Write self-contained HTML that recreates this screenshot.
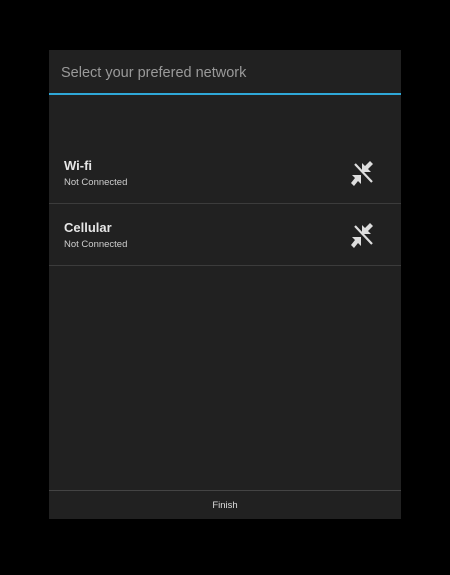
<!DOCTYPE html>
<html><head><style>
body{margin:0;background:#000;width:450px;height:575px;position:relative;font-family:"Liberation Sans",sans-serif;overflow:hidden}
.p{position:absolute;left:49px;top:50px;width:352px;height:469px;background:#212121}
.h{position:absolute;left:12px;top:15px;font-size:14.5px;color:#9a9a9a}
.bl{position:absolute;left:0;top:43px;width:352px;height:2px;background:#2fa8d8}
.row{position:absolute;left:0;width:352px;height:61px;border-bottom:1px solid #3c3c3c}
.t{position:absolute;left:15px;top:16px;font-size:13px;font-weight:bold;color:#e6e6e6}
.s{position:absolute;left:15px;top:35px;font-size:9.5px;color:#cfcfcf}
.ic{position:absolute;left:302px;top:18px}
.f{position:absolute;left:0;top:440px;width:352px;border-top:1px solid #444;height:29px;text-align:center;font-size:9.5px;color:#ddd;line-height:29px}
</style></head><body>
<div class="p">
<div class="h">Select your prefered network</div>
<div class="bl"></div>
<div class="row" style="top:92px"><div class="t">Wi-fi</div><div class="s">Not Connected</div>
<svg class="ic" width="24" height="26" viewBox="0 0 24 26"><line x1="4" y1="4" x2="21" y2="22" stroke="#ddd" stroke-width="2.2"/><polygon points="11,3 11,12 20,12 17,9 22,4 19,1 14,6" fill="#ddd"/><polygon points="1,15 10,15 10,24 7,21 3,26 0,23 4,18" fill="#ddd"/></svg></div>
<div class="row" style="top:154px"><div class="t">Cellular</div><div class="s">Not Connected</div>
<svg class="ic" width="24" height="26" viewBox="0 0 24 26"><line x1="4" y1="4" x2="21" y2="22" stroke="#ddd" stroke-width="2.2"/><polygon points="11,3 11,12 20,12 17,9 22,4 19,1 14,6" fill="#ddd"/><polygon points="1,15 10,15 10,24 7,21 3,26 0,23 4,18" fill="#ddd"/></svg></div>
<div class="f">Finish</div>
</div>
</body></html>
